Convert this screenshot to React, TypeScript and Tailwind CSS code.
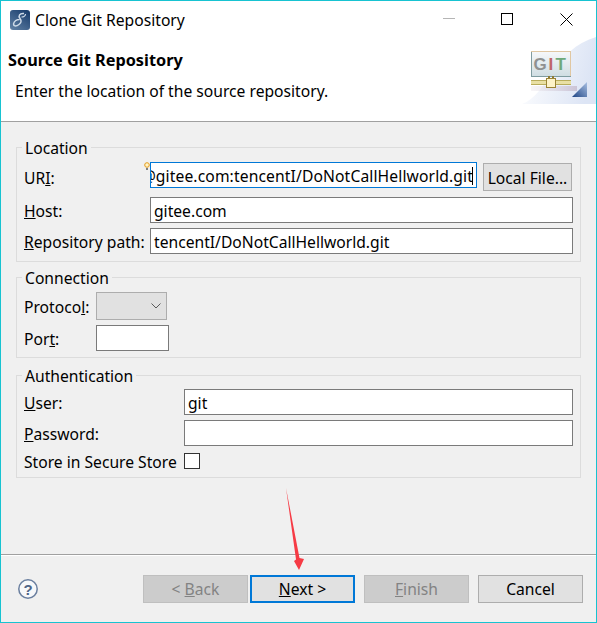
import React from "react";

function Input({ value, w }: { value?: string; w: string }) {
  return (
    <div className={`${w} h-[26px] shrink-0 bg-white border border-[#7a7a7a] pl-[3px] pt-[2px] flex items-center overflow-hidden whitespace-nowrap`}>
      {value}
    </div>
  );
}

function Group({ title, children, cls }: { title: string; children: React.ReactNode; cls: string }) {
  return (
    <fieldset className={`border border-[#dcdcdc] min-w-0 pl-[7px] pr-[7px] ${cls}`}>
      <legend className="ml-[-2px] px-[3px] h-[20px] leading-[22px]">{title}</legend>
      {children}
    </fieldset>
  );
}

function Btn({ children, disabled, focus }: { children: React.ReactNode; disabled?: boolean; focus?: boolean }) {
  const skin = disabled
    ? "bg-[#cccccc] border border-[#bfbfbf] text-[#838383]"
    : focus
    ? "bg-[#e1e1e1] border-2 border-[#0078d7] text-black"
    : "bg-[#e1e1e1] border border-[#adadad] text-black";
  return <div className={`w-[105px] h-[28px] shrink-0 flex items-center justify-center ${skin}`}>{children}</div>;
}

function GitBanner() {
  return (
    <svg width="74" height="68" viewBox="0 0 74 68" className="absolute right-0 top-[-1px]">
      <defs>
        <linearGradient id="bg" x1="0" y1="0" x2="1" y2="0.2">
          <stop offset="0" stopColor="#ffffff" />
          <stop offset="1" stopColor="#dde5f5" />
        </linearGradient>
        <linearGradient id="scr" x1="0" y1="0" x2="0" y2="1">
          <stop offset="0" stopColor="#f6f8fa" />
          <stop offset="1" stopColor="#cfdde2" />
        </linearGradient>
        <linearGradient id="tri" x1="0" y1="1" x2="1" y2="0">
          <stop offset="0" stopColor="#1f4585" />
          <stop offset="1" stopColor="#a9c0e3" />
        </linearGradient>
        <linearGradient id="sh" x1="0" y1="0" x2="1" y2="0">
          <stop offset="0" stopColor="#e4dfe6" stopOpacity="0.3" />
          <stop offset="1" stopColor="#c9c0d2" stopOpacity="0.9" />
        </linearGradient>
      </defs>
      <path d="M0 67 C26 58 32 12 74 0 L74 67 Z" fill="url(#bg)" />
      <rect x="9.5" y="14.5" width="39" height="25" fill="url(#scr)" stroke="#e0c7a2" />
      <path d="M9.5 39.5 V15 M9 39.5 H49" stroke="#7f9ca0" strokeWidth="1" fill="none" />
      <text x="11.5" y="33" fontFamily="'Liberation Sans', sans-serif" fontWeight="700" fontSize="17" fill="#8f9191">G</text>
      <text x="26.5" y="33" fontFamily="'Liberation Sans', sans-serif" fontWeight="700" fontSize="17" fill="#c0666a">I</text>
      <text x="33.5" y="33" fontFamily="'Liberation Sans', sans-serif" fontWeight="700" fontSize="17" fill="#6fa97a">T</text>
      <rect x="9" y="49" width="46" height="5" fill="url(#sh)" />
      <path d="M9 43 H49 V48 H9 Z" fill="#e9e0a4" />
      <path d="M9 43.5 H49 M9 47.5 H49" stroke="#b9ad5c" />
      <rect x="26" y="39" width="2" height="3" fill="#8d7c3a" />
      <rect x="30" y="39" width="2" height="3" fill="#8d7c3a" />
      <rect x="24.5" y="41.5" width="9" height="9" fill="#fdf3c8" stroke="#9a8435" />
      <path d="M50 60 L65 45 V60 Z" fill="url(#tri)" />
    </svg>
  );
}

export default function App() {
  return (
    <div className="relative w-[597px] h-[623px] border border-[#17c3d1] bg-[#f0f0f0] flex flex-col overflow-hidden text-[15.65px] leading-[20px] text-black font-['Noto_Sans',sans-serif]">
      {/* title bar */}
      <div className="h-[37px] shrink-0 bg-white flex items-center pl-[9px]">
        <svg width="20" height="20" viewBox="0 0 20 20" className="shrink-0">
          <defs>
            <linearGradient id="ec" x1="0.8" y1="0" x2="0.1" y2="1">
              <stop offset="0" stopColor="#1b3f6e" />
              <stop offset="1" stopColor="#5f7fa3" />
            </linearGradient>
          </defs>
          <rect width="20" height="20" rx="3" fill="url(#ec)" />
          <path d="M14 3.5 C9.5 3 8 6 10 8.5 C12 11 11 13 9 14.5 C6.5 16.5 3.5 16.5 3.5 14 C4 11 7 9.5 9.5 9.5" fill="none" stroke="#cfdbe8" strokeWidth="1.5" />
          <path d="M15.5 4 C15.5 6 13.5 7 11.5 7" fill="none" stroke="#cfdbe8" strokeWidth="1.2" />
        </svg>
        <span className="ml-[5px] flex-1">Clone Git Repository</span>
        <svg width="12" height="1" className="absolute left-[442px] top-[17px]"><rect width="12" height="1" fill="#b5b5b5" /></svg>
        <svg width="13" height="13" className="absolute left-[500px] top-[12px]"><rect x="0.5" y="0.5" width="11" height="11" fill="none" stroke="#000" /></svg>
        <svg width="13" height="13" className="absolute left-[559px] top-[12px]"><path d="M0.5 0.5 L12.5 12.5 M12.5 0.5 L0.5 12.5" stroke="#000" /></svg>
      </div>

      {/* banner */}
      <div className="relative h-[84px] shrink-0 bg-white border-b border-[#a0a0a0]">
        <div className="absolute right-0 top-0 h-full">
          <GitBanner />
        </div>
        <div className="pl-[7px] pt-[11px] font-bold text-[16.3px] leading-[22px]">Source Git Repository</div>
        <div className="pl-[14px] pt-[10px]">Enter the location of the source repository.</div>
      </div>

      {/* form */}
      <div className="flex-1 pl-[15px] pr-[15px] pt-[15px] border-b border-[#a0a0a0] flex flex-col">
        <Group title="Location" cls="pb-[7px]">
          <div className="pt-[5px] flex items-start">
            <div className="relative w-[126px] h-[29px] pt-[6px]">
              <span>UR<u>I</u>:</span>
              <svg width="6" height="9" viewBox="0 0 6 9" className="absolute left-[120px] top-0">
                <circle cx="3" cy="3" r="2.3" fill="#fff4c8" stroke="#e49a1a" />
                <rect x="2" y="6" width="2" height="2" fill="#7f7f7f" />
              </svg>
            </div>
            <div className="w-[327px] h-[26px] bg-white border border-[#0078d7] pt-[2px] flex items-center justify-end overflow-hidden whitespace-nowrap pl-[5px] pr-[3px]">
              <span className="shrink-0 tracking-[0.12px]">git@gitee.com:tencentI/DoNotCallHellworld.git</span>
              <span className="shrink-0 w-[1px] h-[18px] bg-black ml-[-1px]" />
            </div>
            <div className="ml-[6px] mt-[1px] w-[89px] h-[28px] bg-[#e1e1e1] border border-[#adadad] pt-[2px] flex items-center justify-center whitespace-nowrap">Local File...</div>
          </div>
          <div className="mt-[6px] flex items-center">
            <span className="w-[126px] pt-[2px]"><u>H</u>ost:</span>
            <Input w="w-[423px]" value="gitee.com" />
          </div>
          <div className="mt-[5px] flex items-center">
            <span className="w-[126px] pt-[2px] whitespace-nowrap"><u>R</u>epository path:</span>
            <Input w="w-[423px]" value="tencentI/DoNotCallHellworld.git" />
          </div>
        </Group>

        <Group title="Connection" cls="mt-[5px] pb-[6px]">
          <div className="pt-[5px] flex items-center">
            <span className="w-[72px] pt-[2px] whitespace-nowrap">Protoco<u>l</u>:</span>
            <div className="w-[71px] h-[28px] bg-[#e1e1e1] border border-[#adadad] flex items-center justify-end pr-[5px]">
              <svg width="10" height="6" viewBox="0 0 10 6"><path d="M0.5 0.5 L5 5 L9.5 0.5" fill="none" stroke="#5a5a5a" /></svg>
            </div>
          </div>
          <div className="mt-[5px] flex items-center">
            <span className="w-[72px] pt-[2px]">Por<u>t</u>:</span>
            <Input w="w-[73px]" />
          </div>
        </Group>

        <Group title="Authentication" cls="mt-[7px] pb-[8px]">
          <div className="pt-[4px] flex items-center">
            <span className="w-[160px] pt-[2px]"><u>U</u>ser:</span>
            <Input w="w-[389px]" value="git" />
          </div>
          <div className="mt-[5px] flex items-center">
            <span className="w-[160px] pt-[2px]"><u>P</u>assword:</span>
            <Input w="w-[389px]" />
          </div>
          <div className="mt-[7px] flex items-center h-[16px]">
            <span className="w-[160px] pt-[2px] whitespace-nowrap">Store in Secure Store</span>
            <div className="w-[16px] h-[16px] bg-white border border-[#333333]" />
          </div>
        </Group>
      </div>

      {/* footer */}
      <div className="h-[67px] shrink-0 border-t border-white flex items-start pt-[19px] pl-[17px]">
        <svg width="20" height="20" viewBox="0 0 20 20" className="shrink-0 mt-[4px]">
          <circle cx="10" cy="10" r="9.2" fill="#f7f8fa" stroke="#6a7f9f" strokeWidth="1.5" />
          <text x="10" y="15.5" textAnchor="middle" fontFamily="'Liberation Sans', sans-serif" fontWeight="700" fontSize="15" fill="#4f6587">?</text>
        </svg>
        <div className="ml-[105px] flex">
          <Btn disabled>&lt; <u className="ml-[4px]">B</u>ack</Btn>
          <div className="ml-[2px]"><Btn focus><u>N</u>ext &gt;</Btn></div>
          <div className="ml-[9px]"><Btn disabled><u>F</u>inish</Btn></div>
          <div className="ml-[9px]"><Btn>Cancel</Btn></div>
        </div>
      </div>

      {/* annotation arrow */}
      <svg width="30" height="90" viewBox="0 0 30 90" className="absolute left-[277px] top-[487px]">
        <path d="M8 0 L21.5 70 L26 71 L21 82 L16 73 L18 71.5 Z" fill="#f63b45" />
      </svg>
    </div>
  );
}
